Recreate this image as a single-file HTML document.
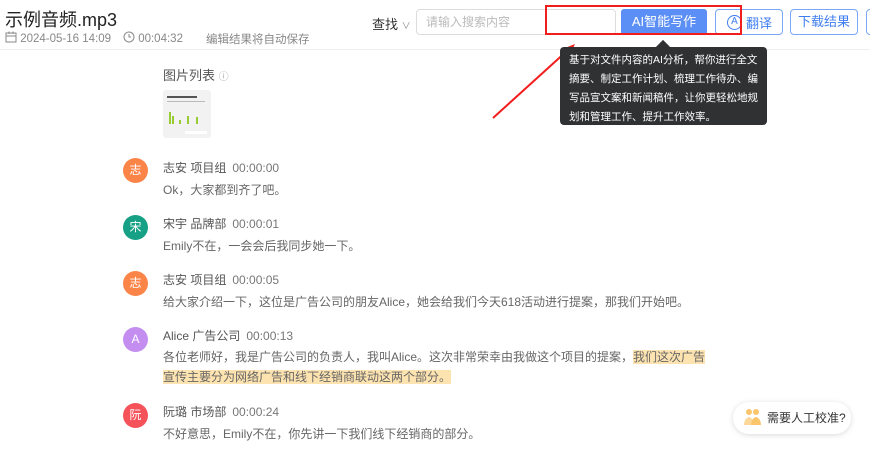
<!DOCTYPE html>
<html><head><meta charset="utf-8"><style>
*{margin:0;padding:0;box-sizing:border-box}
body{width:870px;height:456px;overflow:hidden;background:#fff;font-family:"Liberation Sans","Noto Sans CJK SC",sans-serif;color:#333;position:relative}
.a{position:absolute;white-space:nowrap}
.av{position:absolute;left:123px;width:25px;height:25px;border-radius:50%;color:#fff;font-size:12px;text-align:center;line-height:25px}
.nm{position:absolute;left:163px;font-size:12px;color:#555}
.nm span{color:#777;margin-left:6px}
.tx{position:absolute;left:163px;font-size:12px;color:#666;white-space:nowrap}
.btn{position:absolute;top:9px;height:26px;border:1px solid #7aa6f5;border-radius:4px;color:#3f7ef0;font-size:13px;line-height:24px;text-align:center;background:#fff}
</style></head><body>
<div class="a" style="left:5px;top:6px;font-size:18px;color:#222">示例音频.mp3</div>
<div class="a" style="left:5px;top:31px;font-size:11.5px;color:#888">
<svg width="12" height="12" viewBox="0 0 12 12" style="vertical-align:-1px"><rect x="1" y="2" width="10" height="9" fill="none" stroke="#888"/><line x1="1" y1="5" x2="11" y2="5" stroke="#888"/><line x1="4" y1="0.5" x2="4" y2="3" stroke="#888"/><line x1="8" y1="0.5" x2="8" y2="3" stroke="#888"/></svg> 2024-05-16 14:09</div>
<div class="a" style="left:123px;top:31px;font-size:11.5px;color:#888"><svg width="12" height="12" viewBox="0 0 12 12" style="vertical-align:-1px"><circle cx="6" cy="6" r="5" fill="none" stroke="#888"/><path d="M6 3v3h2" fill="none" stroke="#888"/></svg> 00:04:32</div>
<div class="a" style="left:206px;top:31px;font-size:11.5px;color:#888">编辑结果将自动保存</div>
<div class="a" style="left:0;top:49px;width:870px;height:1px;background:#eee"></div>
<div class="a" style="left:372px;top:14px;font-size:13px;color:#333">查找 <span style="font-size:9px;color:#888">∨</span></div>
<div class="a" style="left:416px;top:9px;width:200px;height:26px;border:1px solid #ddd;border-radius:4px;font-size:12px;color:#bbb;line-height:24px;padding-left:9px">请输入搜索内容</div>
<div class="a" style="left:621px;top:9px;width:86px;height:26px;background:#5b8ff5;border-radius:3px;color:#fff;font-size:13px;line-height:26px;text-align:center">AI智能写作</div>
<div class="btn" style="left:715px;width:68px"></div>
<div class="a" style="left:727px;top:15px;width:15px;height:15px;border:1.5px solid #3f7ef0;border-radius:50%;font-size:10px;line-height:12px;text-align:center;color:#3f7ef0">A</div>
<div class="a" style="left:746px;top:13px;font-size:13px;color:#3f7ef0">翻译</div>
<div class="btn" style="left:790px;width:68px">下载结果</div>
<div class="btn" style="left:866px;width:20px"></div>
<div class="a" style="left:545px;top:5px;width:197px;height:30px;border:2px solid #f21d1d"></div>
<svg class="a" style="left:0;top:0" width="870" height="456"><line x1="493" y1="118" x2="568" y2="50" stroke="#f21d1d" stroke-width="2"/><polygon points="575,44 560,50 569,57" fill="#f21d1d"/></svg>
<div class="a" style="left:560px;top:47px;width:207px;height:78px;background:#303133;border-radius:4px;color:#fff;font-size:10.5px;line-height:19px;padding:4px 9px;white-space:normal">基于对文件内容的AI分析，帮你进行全文摘要、制定工作计划、梳理工作待办、编写品宣文案和新闻稿件，让你更轻松地规划和管理工作、提升工作效率。</div>
<div class="a" style="left:658px;top:42px;width:10px;height:10px;background:#303133;transform:rotate(45deg)"></div>
<div class="a" style="left:163px;top:65px;font-size:13px;color:#555">图片列表 <span style="font-size:10px;color:#aaa">ⓘ</span></div>
<div class="a" style="left:163px;top:90px;width:48px;height:48px;background:#f2f2f2;border-radius:3px">
<div class="a" style="left:4px;top:6px;width:30px;height:2px;background:#555"></div>
<div class="a" style="left:4px;top:11px;width:38px;height:1px;background:#bbb"></div>
<div class="a" style="left:6px;top:22px;width:2px;height:12px;background:#9c3"></div>
<div class="a" style="left:9px;top:26px;width:2px;height:8px;background:#9c3"></div>
<div class="a" style="left:16px;top:30px;width:2px;height:4px;background:#9c3"></div>
<div class="a" style="left:24px;top:26px;width:2px;height:8px;background:#9c3"></div>
<div class="a" style="left:33px;top:27px;width:2px;height:7px;background:#9c3"></div>
<div class="a" style="left:22px;top:41px;width:22px;height:3px;background:#fff"></div>
</div>
<div class="av" style="top:158px;background:#fb8549">志</div>
<div class="nm" style="top:159px">志安 项目组<span>00:00:00</span></div>
<div class="tx" style="top:181px">Ok，大家都到齐了吧。</div>
<div class="av" style="top:215px;background:#16a085">宋</div>
<div class="nm" style="top:215px">宋宇 品牌部<span>00:00:01</span></div>
<div class="tx" style="top:237px">Emily不在，一会会后我同步她一下。</div>
<div class="av" style="top:271px;background:#fb8549">志</div>
<div class="nm" style="top:271px">志安 项目组<span>00:00:05</span></div>
<div class="tx" style="top:293px">给大家介绍一下，这位是广告公司的朋友Alice，她会给我们今天618活动进行提案，那我们开始吧。</div>
<div class="av" style="top:327px;background:#c38ef0">A</div>
<div class="nm" style="top:327px">Alice 广告公司<span>00:00:13</span></div>
<div class="tx" style="top:347px;line-height:20px">各位老师好，我是广告公司的负责人，我叫Alice。这次非常荣幸由我做这个项目的提案，<span style="background:#fde3b0">我们这次广告</span><br><span style="background:#fde3b0">宣传主要分为网络广告和线下经销商联动这两个部分。</span></div>
<div class="av" style="top:403px;background:#f5525a">阮</div>
<div class="nm" style="top:403px">阮璐 市场部<span>00:00:24</span></div>
<div class="tx" style="top:425px">不好意思，Emily不在，你先讲一下我们线下经销商的部分。</div>
<div class="a" style="left:733px;top:402px;width:118px;height:32px;border-radius:16px;background:#fff;box-shadow:0 1px 6px rgba(0,0,0,.15);font-size:12px;color:#333;line-height:32px;padding-left:34px">需要人工校准?</div>
<svg class="a" style="left:743px;top:408px" width="20" height="18"><circle cx="6" cy="4" r="3" fill="#fbc56b"/><circle cx="13" cy="4" r="3" fill="#fbc56b"/><path d="M1 17c0-6 4-8 5-8s5 2 5 8z" fill="#fdd89a"/><path d="M8 17c0-6 4-8 5-8s5 2 5 8z" fill="#fbc56b"/></svg>
</body></html>
